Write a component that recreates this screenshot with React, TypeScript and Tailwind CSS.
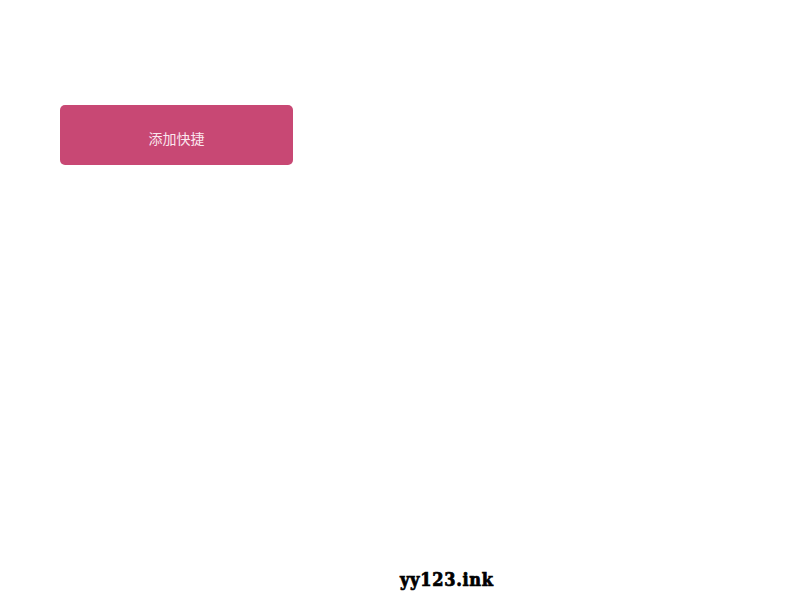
export default function App() {
  return (
    <div className="flex h-[600px] w-[800px] flex-col bg-white">
      <div className="pt-[105px] pl-[60px]">
        <button className="h-[60px] w-[233px] rounded-[5px] bg-[#c84874] pt-[6px] font-['Noto_Sans_CJK_SC',sans-serif] text-[14px] text-[#fbe6ee]">
          添加快捷
        </button>
      </div>
      <div className="mt-auto pb-[9px] pl-[400px] font-['DejaVu_Serif_Condensed','DejaVu_Serif',serif] text-[18px] leading-[22px] font-bold tracking-[0.7px] text-black [-webkit-text-stroke:0.7px_black]">
        yy123.ink
      </div>
    </div>
  );
}
